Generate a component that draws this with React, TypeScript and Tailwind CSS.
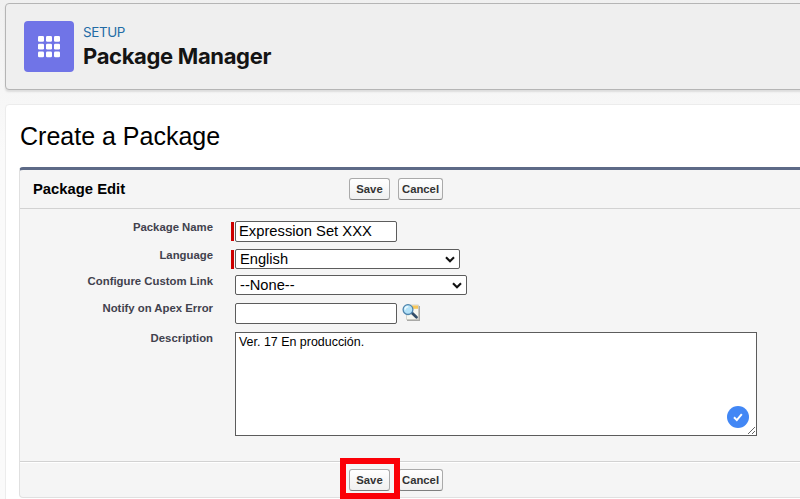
import React from "react";

function Button({ label, width }: { label: string; width: string }) {
  return (
    <button
      className={`${width} h-[22px] shrink-0 whitespace-nowrap rounded-[3px] border border-[#aaa] border-b-[#7f7f7f] bg-linear-to-b from-white to-[#f0f0f0] text-center text-[11.3px] leading-[20px] font-bold text-[#333]`}
    >
      {label}
    </button>
  );
}

function ButtonPair() {
  return (
    <div className="flex gap-2">
      <Button label="Save" width="w-[41px]" />
      <Button label="Cancel" width="w-[45px]" />
    </div>
  );
}

function Row({ label, className, labelClass = "", required = false, children }: {
  label: string;
  className: string;
  labelClass?: string;
  required?: boolean;
  children: React.ReactNode;
}) {
  return (
    <div className={`flex items-start ${className}`}>
      <label className={`w-[193px] shrink-0 text-right text-[11.35px] leading-[13px] font-bold text-[#41414d] ${labelClass}`}>
        {label}
      </label>
      <div className={`ml-[18px] mr-px mt-px h-[19px] w-[3px] shrink-0 ${required ? "bg-[#c00]" : ""}`} />
      {children}
    </div>
  );
}

function Select({ value, width }: { value: string; width: string }) {
  return (
    <div className={`${width} flex h-5 items-center justify-between rounded-[2px] border border-[#5c5c5c] bg-white pl-1 pr-[4px] text-[14.67px] leading-[18px]`}>
      <span>{value}</span>
      <svg width="10" height="7" viewBox="0 0 10 7" fill="none" stroke="#111" strokeWidth="2.1">
        <path d="M1 1.2 5 5.2 9 1.2" />
      </svg>
    </div>
  );
}

function LookupIcon() {
  return (
    <svg className="ml-[5px] mt-px" width="19" height="18" viewBox="0 0 19 18">
      <path d="M5 2h13v15H5z" fill="#a9a9a7" />
      <path d="M4.5 1h12v14.5h-12z" fill="#f7f7ef" stroke="#c6c6bd" strokeWidth=".7" />
      <path d="M10 1.5h6v3.3h-6z" fill="#f7c65b" />
      <path d="m9.5 8.5 5 4.8" stroke="#334e68" strokeWidth="2.8" strokeLinecap="round" />
      <circle cx="6" cy="5.6" r="4.9" fill="#b4e2f8" stroke="#4f85ad" strokeWidth="1.3" />
      <path d="M3 5.6c.3-2 1.6-2.9 3.3-2.7" stroke="#eafaff" strokeWidth="1.5" fill="none" />
    </svg>
  );
}

export default function App() {
  return (
    <div className="h-[499px] w-[800px] overflow-hidden bg-linear-to-b from-[#f0f0f0] from-0% to-[#fafafa] to-30% pl-[5px] pt-[3px] font-['Liberation_Sans',Arial,sans-serif] text-black">
      <header className="flex h-[87px] w-[810px] items-start rounded-[4px] border border-[#b5b5b5] bg-[#efefef] pl-[18px] pt-[17px] shadow-[0_2px_2px_rgba(0,0,0,0.1)]">
        <div className="flex h-[51px] w-[50px] items-center justify-center rounded-[4px] bg-[#7074e7]">
          <svg width="22" height="22" viewBox="0 0 22 22" fill="white">
            {[0, 7.7, 15.4].map((y) =>
              [0, 8, 16].map((x) => <rect key={`${x}-${y}`} x={x} y={y} width="6" height="5.8" rx="1.3" />),
            )}
          </svg>
        </div>
        <div className="ml-[9px] font-[Inter,sans-serif]">
          <div className="mt-[3px] text-[13.4px] leading-4 tracking-[-0.35px] text-[#226ba5]">SETUP</div>
          <h1 className="mt-[3px] text-[22px] leading-[26px] font-bold tracking-[-0.34px] whitespace-nowrap text-[#141414]">
            Package Manager
          </h1>
        </div>
      </header>

      <main className="mt-[14px] h-[410px] w-[810px] rounded-[4px] border border-[#ececec] bg-white pl-[13px] pt-[16px]">
        <h2 className="h-[46px] pl-px text-[25px] leading-[30px]">Create a Package</h2>
        <section className="h-[331px] w-[800px] rounded-[4px] border border-t-[3px] border-[#e0e0e0] border-t-[#5d6a87] bg-[#f5f5f5]">
          <div className="flex h-[39px] items-center border-b border-[#d2d2d2] pl-[13px]">
            <h3 className="w-[316px] text-[14.8px] leading-5 font-bold">Package Edit</h3>
            <ButtonPair />
          </div>
          <div className="h-[253px] border-b border-[#d2d2d2] pt-[12px] shadow-[0_1px_0_white]">
            <Row label="Package Name" className="h-7" required>
              <div className="h-[21px] w-[162px] rounded-[2px] border border-[#5c5c5c] bg-white pl-[3px] text-[14.75px] leading-[19px] whitespace-nowrap">
                Expression Set XXX
              </div>
            </Row>
            <Row label="Language" className="h-[26px]" required>
              <Select value="English" width="w-[225px]" />
            </Row>
            <Row label="Configure Custom Link" className="h-7">
              <Select value="--None--" width="w-[232px]" />
            </Row>
            <Row label="Notify on Apex Error" className="h-[29px]" labelClass="-mt-px">
              <div className="h-[21px] w-[162px] rounded-[2px] border border-[#5c5c5c] bg-white" />
              <LookupIcon />
            </Row>
            <Row label="Description" className="h-[104px]">
              <div className="relative h-[104px] w-[522px] border border-[#5c5c5c] bg-white pl-[3px] pt-[2px] text-[12.45px] leading-[15px]">
                Ver. 17 En producción.
                <svg className="absolute right-[7px] bottom-[7px]" width="22" height="22" viewBox="0 0 22 22">
                  <circle cx="11" cy="11" r="11" fill="#4287f5" />
                  <path d="m7 11.3 2.8 2.8 5-6" fill="none" stroke="white" strokeWidth="2" />
                </svg>
                <svg className="absolute right-px bottom-px" width="7" height="7" viewBox="0 0 7 7">
                  <path d="M0 7 7 0M4 7l3-3" stroke="#555" strokeWidth=".9" />
                </svg>
              </div>
            </Row>
          </div>
          <div className="relative flex h-[35px] items-start pl-[329px] pt-[7px]">
            <ButtonPair />
            <div className="absolute left-[320px] top-[-4px] h-[41px] w-[60px] border-[6px] border-[#fb0007]" />
          </div>
        </section>
      </main>
    </div>
  );
}
